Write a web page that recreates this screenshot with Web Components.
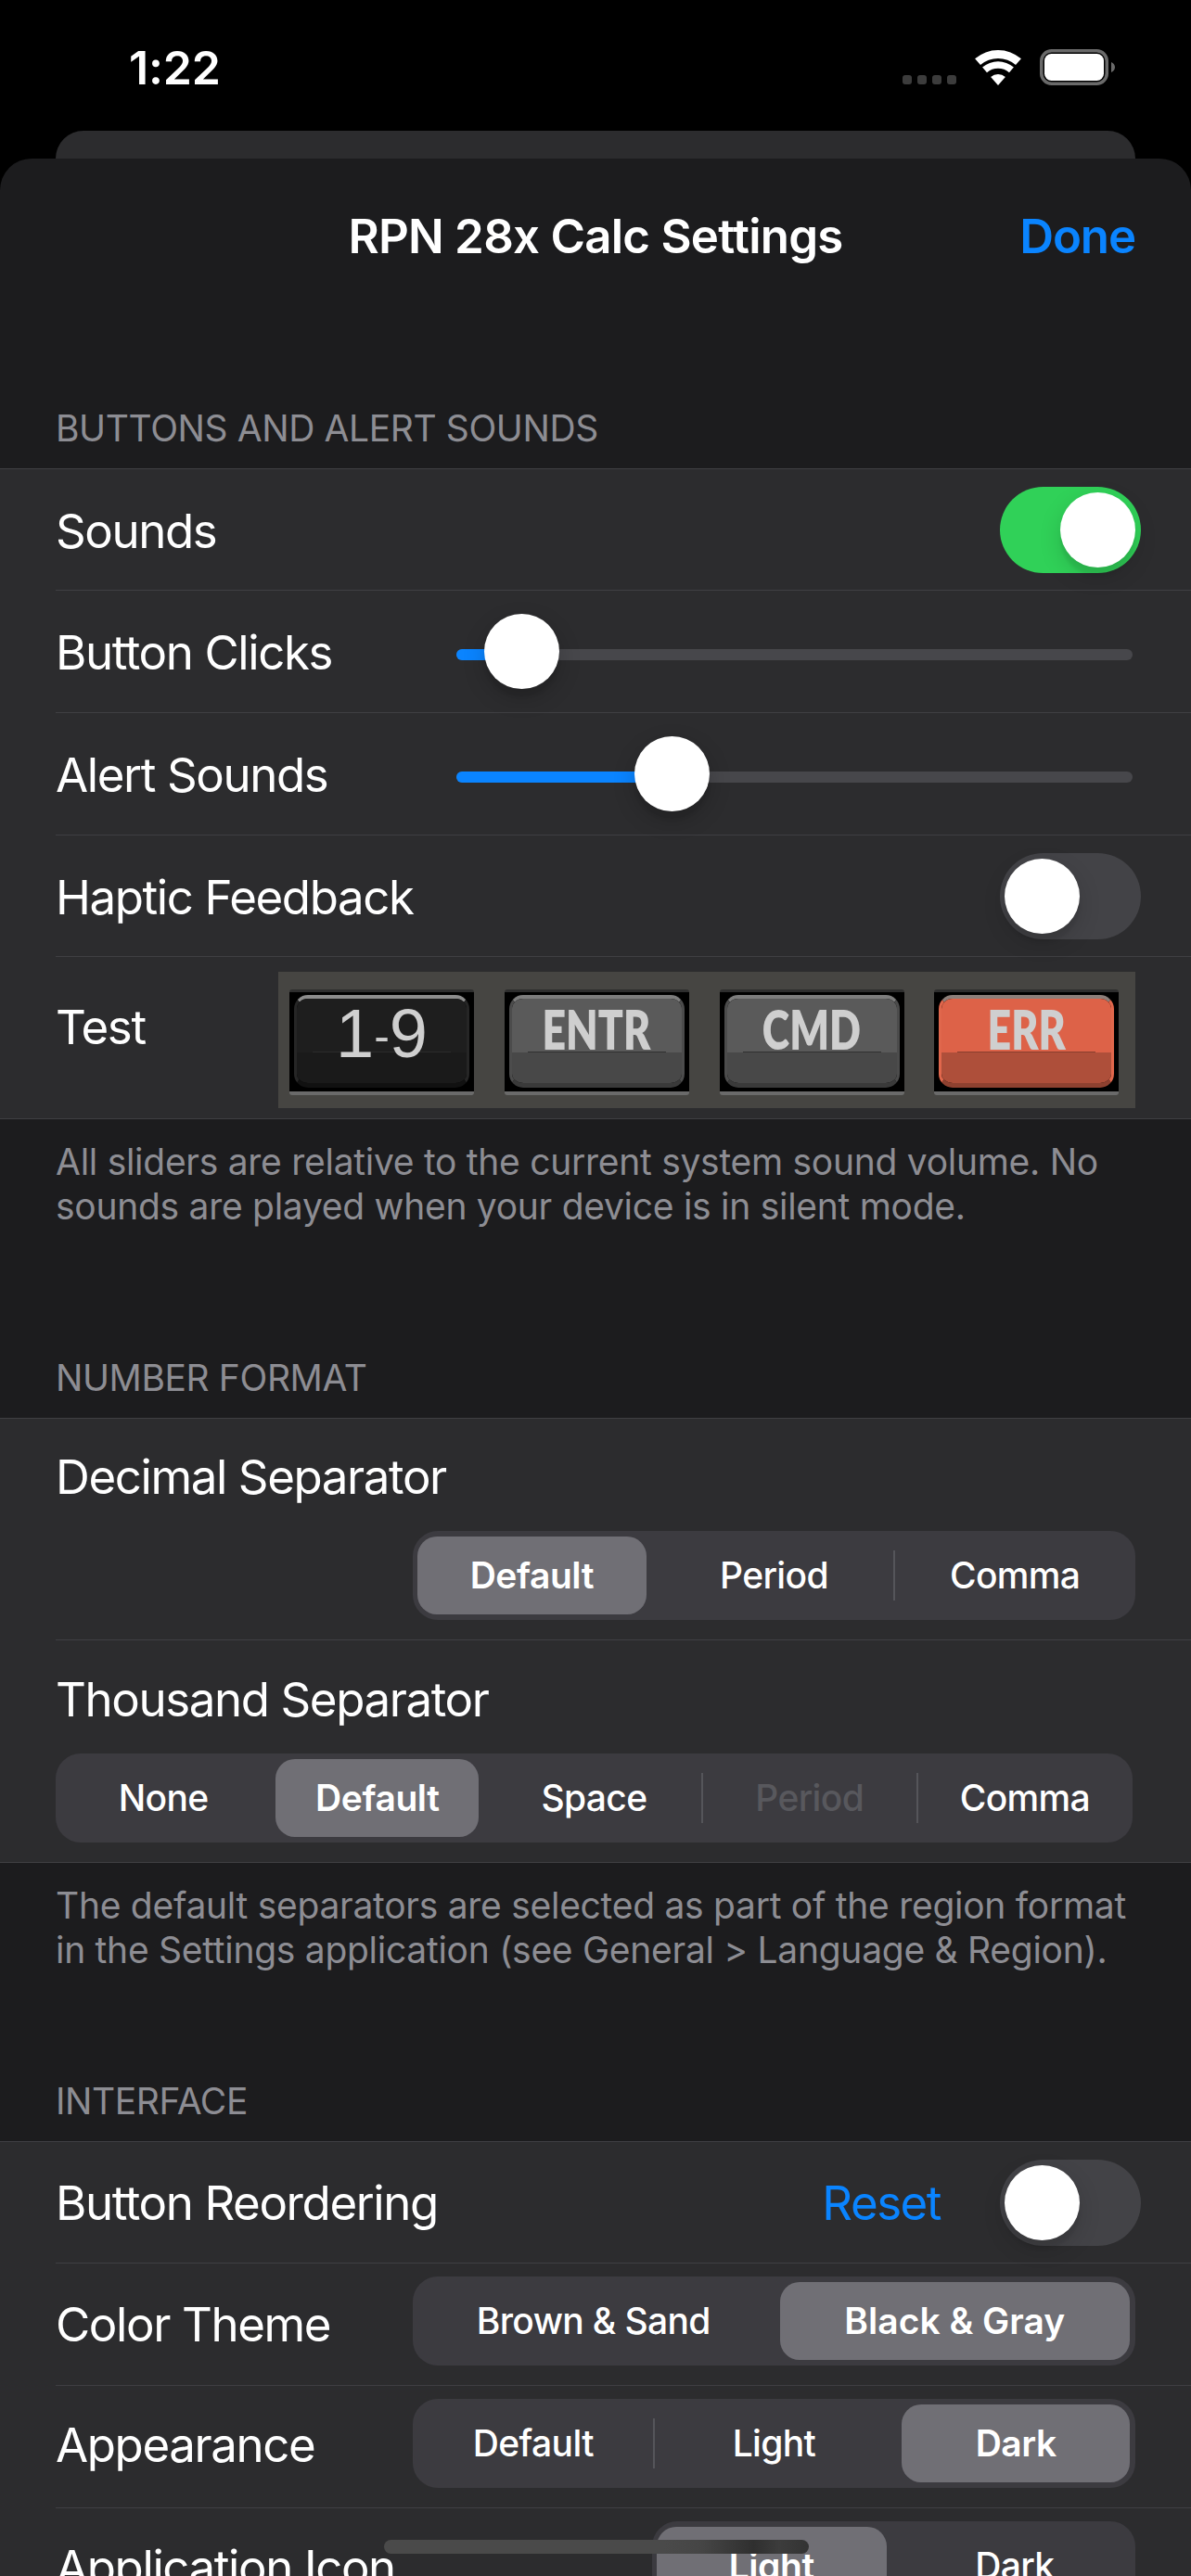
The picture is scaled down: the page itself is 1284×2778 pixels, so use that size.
<!DOCTYPE html>
<html lang="en">
<head>
<meta charset="utf-8">
<title>RPN 28x Calc Settings</title>
<style>
  html, body {
    margin: 0;
    height: 2778px;
    overflow: hidden;
    background: #000;
    font-family: Inter, "Liberation Sans", sans-serif;
    color: #fff;
  }
  .link { color: #0a84ff; margin-right: 64px; letter-spacing: -1.5px; }
</style>
</head>
<body>
<status-bar time="1:22"></status-bar>
<settings-sheet>
  <nav-bar title="RPN 28x Calc Settings" action="Done"></nav-bar>

  <form-section title="Buttons and alert sounds" style="margin-top:98px">
    <form-row style="--row-h:131px">Sounds<toggle-switch slot="control" on></toggle-switch></form-row>
    <form-row>Button Clicks<value-slider slot="control" value="30"></value-slider></form-row>
    <form-row>Alert Sounds<value-slider slot="control" value="192"></value-slider></form-row>
    <form-row style="--row-h:131px">Haptic Feedback<toggle-switch slot="control"></toggle-switch></form-row>
    <form-row last style="--row-h:174px;--row-align:flex-start;--label-top:45px">Test<key-strip slot="control"></key-strip></form-row>
    <span slot="footer">All sliders are relative to the current system sound volume. No<br>sounds are played when your device is in silent mode.</span>
  </form-section>

  <form-section title="Number format" style="margin-top:136px">
    <form-row stacked style="--row-h:239px">Decimal Separator<seg-control slot="control" items="Default|Period|Comma" selected="0" style="width:779px"></seg-control></form-row>
    <form-row stacked last style="--row-h:239px;--stack-top:33px">Thousand Separator<seg-control slot="control" items="None|Default|Space|Period|Comma" selected="1" disabled="3" style="width:1161px;margin-right:3px"></seg-control></form-row>
    <span slot="footer">The default separators are selected as part of the region format<br>in the Settings application (see General &gt; Language &amp; Region).</span>
  </form-section>

  <form-section title="Interface" style="margin-top:114px">
    <form-row style="--row-h:131px;--label-top:0">Button Reordering<span slot="control" class="link">Reset</span><toggle-switch slot="control"></toggle-switch></form-row>
    <form-row style="--label-top:0">Color Theme<seg-control slot="control" items="Brown &amp; Sand|Black &amp; Gray" selected="1" even style="width:779px;margin-top:-8px"></seg-control></form-row>
    <form-row style="--label-top:0;--label-bottom:4px">Appearance<seg-control slot="control" items="Default|Light|Dark" selected="2" style="width:779px;margin-top:-8px"></seg-control></form-row>
    <form-row style="--label-top:0;--label-bottom:4px">Application Icon<seg-control slot="control" items="Light|Dark" selected="0" style="width:521px;margin-top:-8px"></seg-control></form-row>
  </form-section>
</settings-sheet>
<home-indicator></home-indicator>

<script>
// small helper, every element below just sets its markup once
class ShadowElement extends HTMLElement {
  constructor() {
    super();
    this.attachShadow({ mode: "open" });
  }
  connectedCallback() {
    this.shadowRoot.innerHTML = this.render();
  }
}

class StatusBar extends ShadowElement {
  render() {
    return `
      <style>
        :host { display: flex; height: 141px; box-sizing: border-box; padding: 43px 82px 0 139px; }
        .time { font: 600 50px/60px Inter, "Liberation Sans", sans-serif; color: #fff; letter-spacing: -0.2px; }
        .icons { margin-left: auto; margin-top: 10px; height: 39px; display: flex; align-items: flex-end; gap: 20px; }
        .dots { display: flex; gap: 6px; margin-bottom: 1px; }
        .dots i { width: 10px; height: 10px; border-radius: 3px; background: #3c3c3c; }
        svg { display: block; }
      </style>
      <div class="time">${this.getAttribute("time")}</div>
      <div class="icons">
        <div class="dots"><i></i><i></i><i></i><i></i></div>
        <svg width="50" height="38" viewBox="0 0 50 38" fill="#fff">
          <path d="M0.1 9.3A38 38 0 0 1 49.9 9.3L44 16.1A29 29 0 0 0 6 16.1Z"/>
          <path d="M8.1 18.6A25.7 25.7 0 0 1 41.9 18.6L37 24.2A18.3 18.3 0 0 0 13 24.2Z"/>
          <path d="M17.1 28.9A12 12 0 0 1 32.9 28.9L25 38Z"/>
        </svg>
        <svg width="81" height="39" viewBox="0 0 81 39">
          <rect x="1.75" y="1.75" width="70.5" height="35.5" rx="11" fill="none" stroke="#6a6a6a" stroke-width="3.5"/>
          <rect x="5" y="5" width="64" height="29" rx="7.5" fill="#fff"/>
          <path d="M77 14C79.5 15 81 17 81 19.5C81 22 79.5 24 77 25Z" fill="#6a6a6a"/>
        </svg>
      </div>`;
  }
}

class SettingsSheet extends ShadowElement {
  render() {
    return `
      <style>
        :host { display: block; position: relative; }
        .behind { height: 30px; margin: 0 60px; background: #2c2c2e; border-radius: 30px 30px 0 0; }
        .sheet { background: #1c1c1e; border-radius: 34px 34px 0 0; height: 2607px; overflow: hidden; }
      </style>
      <div class="behind"></div>
      <div class="sheet"><slot></slot></div>`;
  }
}

class NavBar extends ShadowElement {
  render() {
    return `
      <style>
        :host { display: grid; grid-template-columns: 1fr auto 1fr; height: 168px; box-sizing: border-box;
                padding: 53px 60px 0; font: 600 51px/61px Inter, "Liberation Sans", sans-serif; letter-spacing: -0.75px; }
        .title { grid-column: 2; white-space: nowrap; }
        .action { justify-self: end; color: #0a84ff; letter-spacing: -1.1px; }
      </style>
      <div class="title">${this.getAttribute("title")}</div>
      <div class="action">${this.getAttribute("action")}</div>`;
  }
}

class FormSection extends ShadowElement {
  render() {
    return `
      <style>
        :host { display: block; }
        .head { padding: 1px 60px 19px; font-size: 39px; line-height: 48px; color: #8d8d93; text-transform: uppercase; letter-spacing: -0.4px; }
        .body { background: #2c2c2e; border-top: 1px solid #3f3f43; border-bottom: 1px solid #3f3f43; }
        .foot { padding: 22px 60px 0; font-size: 39px; line-height: 48px; color: #8d8d93; white-space: nowrap; letter-spacing: -0.28px; }
      </style>
      <div class="head">${this.getAttribute("title")}</div>
      <div class="body"><slot></slot></div>
      <div class="foot"><slot name="footer"></slot></div>`;
  }
}

class FormRow extends ShadowElement {
  render() {
    return `
      <style>
        :host { display: block; padding-left: 60px; font-size: 51px; line-height: 61px; color: #fff; letter-spacing: -1.4px; }
        .inner { display: flex; align-items: var(--row-align, center); height: var(--row-h, 132px); box-sizing: border-box;
                 padding-right: 60px; border-bottom: 1px solid #3f3f43; white-space: nowrap; }
        :host([last]) .inner { border-bottom: 0; }
        .label { padding-top: var(--label-top, 2px); padding-bottom: var(--label-bottom, 0); }
        .control { margin-left: auto; display: flex; align-items: center; letter-spacing: -0.3px; }
        :host([stacked]) .inner { flex-direction: column; align-items: stretch; padding-top: var(--stack-top, 32px); }
        :host([stacked]) .label { padding: 0; }
        :host([stacked]) .control { margin-top: 28px; justify-content: flex-end; }
      </style>
      <div class="inner">
        <div class="label"><slot></slot></div>
        <div class="control"><slot name="control"></slot></div>
      </div>`;
  }
}

class ToggleSwitch extends ShadowElement {
  render() {
    return `
      <style>
        :host { display: block; width: 152px; height: 93px; margin-right: -6px; border-radius: 47px; background: #434347; position: relative; letter-spacing: 0; }
        :host([on]) { background: #30d158; }
        .knob { position: absolute; top: 6px; left: 5px; width: 81px; height: 81px; border-radius: 50%; background: #fff;
                box-shadow: 0 9px 24px rgba(0,0,0,.15), 0 9px 3px rgba(0,0,0,.06); }
        :host([on]) .knob { left: 65px; }
      </style>
      <div class="knob"></div>`;
  }
}

class ValueSlider extends ShadowElement {
  render() {
    const value = Number(this.getAttribute("value"));
    return `
      <style>
        :host { display: block; width: 729px; height: 81px; margin-right: 3px; position: relative; padding-top: 38px; box-sizing: border-box; }
        .track { height: 12px; border-radius: 6px; background: #47474b; overflow: hidden; }
        .fill { height: 100%; background: #0a84ff; width: ${value + 40}px; }
        .knob { position: absolute; top: 0; left: ${value}px; width: 81px; height: 81px; border-radius: 50%; background: #fff;
                box-shadow: 0 9px 24px rgba(0,0,0,.2), 0 9px 3px rgba(0,0,0,.06); }
      </style>
      <div class="track"><div class="fill"></div></div>
      <div class="knob"></div>`;
  }
}

class SegControl extends ShadowElement {
  render() {
    const items = this.getAttribute("items").split("|");
    const selected = Number(this.getAttribute("selected"));
    const disabled = this.getAttribute("disabled");
    const cells = items.map((text, i) => {
      const cls = [];
      if (i === selected) cls.push("sel");
      if (String(i) === disabled) cls.push("off");
      if (i > 0 && i !== selected && i - 1 !== selected) cls.push("div");
      return `<div class="cell ${cls.join(" ")}"><span>${text.replace("&", "&amp;")}</span></div>`;
    });
    return `
      <style>
        :host { display: grid; grid-template-columns: repeat(${items.length}, 1fr); height: 96px; border-radius: 27px;
                background: #3c3b40; font: 500 39px/48px Inter, "Liberation Sans", sans-serif; letter-spacing: -0.65px; color: #fff; }
        .cell { position: relative; display: flex; align-items: center; justify-content: center; min-width: 0; white-space: nowrap; }
        .sel { background: #706f75; border-radius: 21px; margin: 6px 8px 6px 5px; font-weight: 600; letter-spacing: -0.45px; }
        .sel:first-child { margin-right: 9px; }
        .sel:last-child { margin: 6px 6px 6px 8px; }
        :host([even]) .sel { margin: 6px 6px 6px 6px; letter-spacing: 0; }
        :host([even]) .cell:first-child { padding-right: 10px; letter-spacing: -0.45px; }
        .off { color: #58585d; }
        .div::before { content: ""; position: absolute; left: -1px; top: 21px; height: 54px; width: 2px; background: #55555a; }
      </style>
      ${cells.join("")}`;
  }
}

class KeyStrip extends ShadowElement {
  render() {
    return `
      <style>
        :host { display: flex; gap: 32.8px; width: 924px; height: 147px; box-sizing: border-box; margin-top: 16px; padding: 19px 0 0 12px; background: #464542; letter-spacing: 0; }
      </style>
      <calc-key kind="num"><span>1</span><span style="font-size:50px;position:relative;top:-6px">-</span><span>9</span></calc-key>
      <calc-key>ENTR</calc-key>
      <calc-key>CMD</calc-key>
      <calc-key kind="err">ERR</calc-key>`;
  }
}

class CalcKey extends ShadowElement {
  render() {
    return `
      <style>
        :host { display: block; width: 199px; height: 114px; box-sizing: border-box; padding: 6px 5px 0;
                --top: #5a5a5a; --low: #484848; --hi: #7d7d7d; --rim: #3a3a3a; --side: #4c4c4c; --line: #303030;
                background: linear-gradient(#2e2e2e 0 3px, #000 3px 110px, #6a6a6a 110px);
                border-radius: 3px; color: #cfcfcf; }
        :host([kind="num"]) { --top: #1e1e1e; --low: #1a1a1a; --hi: #8c8c8c; --rim: #111; --side: #262626; --line: #2c2c2c; }
        :host([kind="err"]) { --top: #dd6248; --low: #ae4f3a; --hi: #8c7f7a; --rim: #8e4130; --side: #e0674c; --line: #8b3f2e; }
        .face { position: relative; height: 100px; box-sizing: border-box; border-radius: 15px; overflow: hidden;
                border: 3px solid var(--side); border-top: 4px solid var(--hi); border-bottom: 5px solid var(--rim); }
        .upper { height: 58px; background: var(--top); display: flex; align-items: flex-end; justify-content: center; }
        .lower { height: 33px; background: var(--low); }
        .text { font: 800 58px/58px Lato, "Liberation Sans", sans-serif; transform: scaleX(.77); white-space: nowrap; margin-bottom: -4px; }
        :host([kind="num"]) .text { font: 400 74px/74px "Liberation Sans", sans-serif; transform: none; margin-bottom: -25px; display: flex; align-items: baseline; position: relative; z-index: 1; }
        .line { position: absolute; left: 17px; right: 17px; top: 57px; height: 1px; background: var(--line); }
      </style>
      <div class="face">
        <div class="upper"><div class="text"><slot></slot></div></div>
        <div class="lower"></div>
        <div class="line"></div>
      </div>`;
  }
}

class HomeIndicator extends ShadowElement {
  render() {
    return `
      <style>
        :host { position: absolute; left: 414px; top: 2739px; width: 458px; height: 15px; border-radius: 8px;
                background: linear-gradient(90deg, #4a4a4a 0 66%, #454545 75%, #2f2f2f 87%, #3c3c3c 93%, #333 100%); }
      </style>`;
  }
}

customElements.define("status-bar", StatusBar);
customElements.define("settings-sheet", SettingsSheet);
customElements.define("nav-bar", NavBar);
customElements.define("form-section", FormSection);
customElements.define("form-row", FormRow);
customElements.define("toggle-switch", ToggleSwitch);
customElements.define("value-slider", ValueSlider);
customElements.define("seg-control", SegControl);
customElements.define("key-strip", KeyStrip);
customElements.define("calc-key", CalcKey);
customElements.define("home-indicator", HomeIndicator);
</script>
</body>
</html>
